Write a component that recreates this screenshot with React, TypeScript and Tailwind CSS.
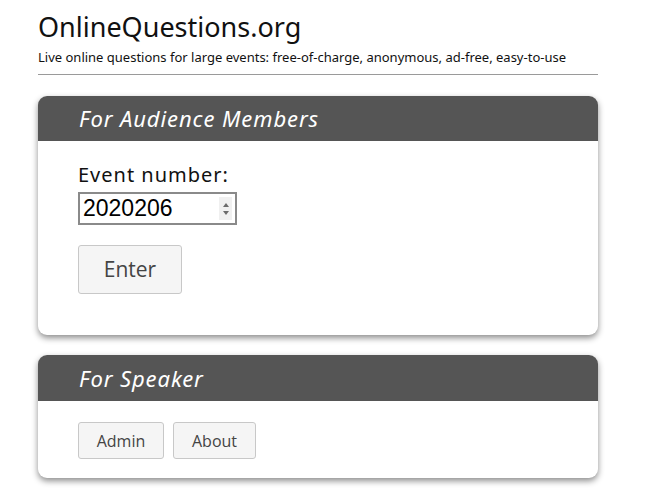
import { useState } from 'react';

const cardClass =
  'w-[560px] overflow-hidden rounded-[9px] bg-white shadow-[0_3px_6px_rgba(0,0,0,0.45)]';
const headClass =
  'flex items-center bg-[#555555] pl-[41px] text-[22px] italic tracking-[0.9px] text-white';
const btnClass =
  'rounded-[3px] border border-[#c8c8c8] bg-[#f5f5f5] text-[#444] font-["Open_Sans",sans-serif]';

export default function App() {
  const [eventNo, setEventNo] = useState('2020206');

  return (
    <div className='min-h-[504px] bg-white font-["Noto_Sans",sans-serif] text-[#111]'>
      <div className="ml-[38px] w-[560px] pt-[11px]">
        <h1 className="text-[27px] leading-[32px] text-[#111]">OnlineQuestions.org</h1>
        <p className="mt-[6px] text-[13px] leading-[16px]">
          Live online questions for large events: free-of-charge, anonymous, ad-free, easy-to-use
        </p>
        <hr className="mt-[9px] border-t border-[#9a9a9a]" />

        <section className={`${cardClass} mt-[21px]`}>
          <div className={`${headClass} h-[45px]`}>For Audience Members</div>
          <div className="px-[40px] pb-[41px] pt-[21px]">
            <label className="block text-[20px] leading-[26px] tracking-[1px]">Event number:</label>
            <div className="relative mt-[4px] w-[159px]">
              <input
                type="text"
                inputMode="numeric"
                value={eventNo}
                onChange={(e) => setEventNo(e.target.value)}
                className='block h-[33px] w-[159px] border-2 border-[#8a8a8a] px-[3px] text-[23px] font-["Liberation_Sans",Arial,sans-serif] text-black outline-none'
              />
              {/* number spinner */}
              <span className="pointer-events-none absolute right-[5px] top-[5px] flex h-[23px] w-[13px] flex-col items-center justify-center gap-[4px] bg-[#f0f0f0]">
                <svg width="6" height="4" viewBox="0 0 6 4">
                  <path d="M3 0 L6 4 L0 4 Z" fill="#6b6b6b" />
                </svg>
                <svg width="6" height="4" viewBox="0 0 6 4">
                  <path d="M0 0 L6 0 L3 4 Z" fill="#6b6b6b" />
                </svg>
              </span>
            </div>
            <div className="mt-[20px]">
              <button type="button" className={`${btnClass} h-[49px] w-[104px] text-[21px]`}>
                Enter
              </button>
            </div>
          </div>
        </section>

        <section className={`${cardClass} mt-[20px]`}>
          <div className={`${headClass} h-[46px]`}>For Speaker</div>
          <div className="flex gap-[9px] px-[40px] pb-[19px] pt-[21px]">
            <button type="button" className={`${btnClass} h-[37px] w-[86px] text-[16px]`}>
              Admin
            </button>
            <button type="button" className={`${btnClass} h-[37px] w-[83px] text-[16px]`}>
              About
            </button>
          </div>
        </section>
      </div>
    </div>
  );
}
